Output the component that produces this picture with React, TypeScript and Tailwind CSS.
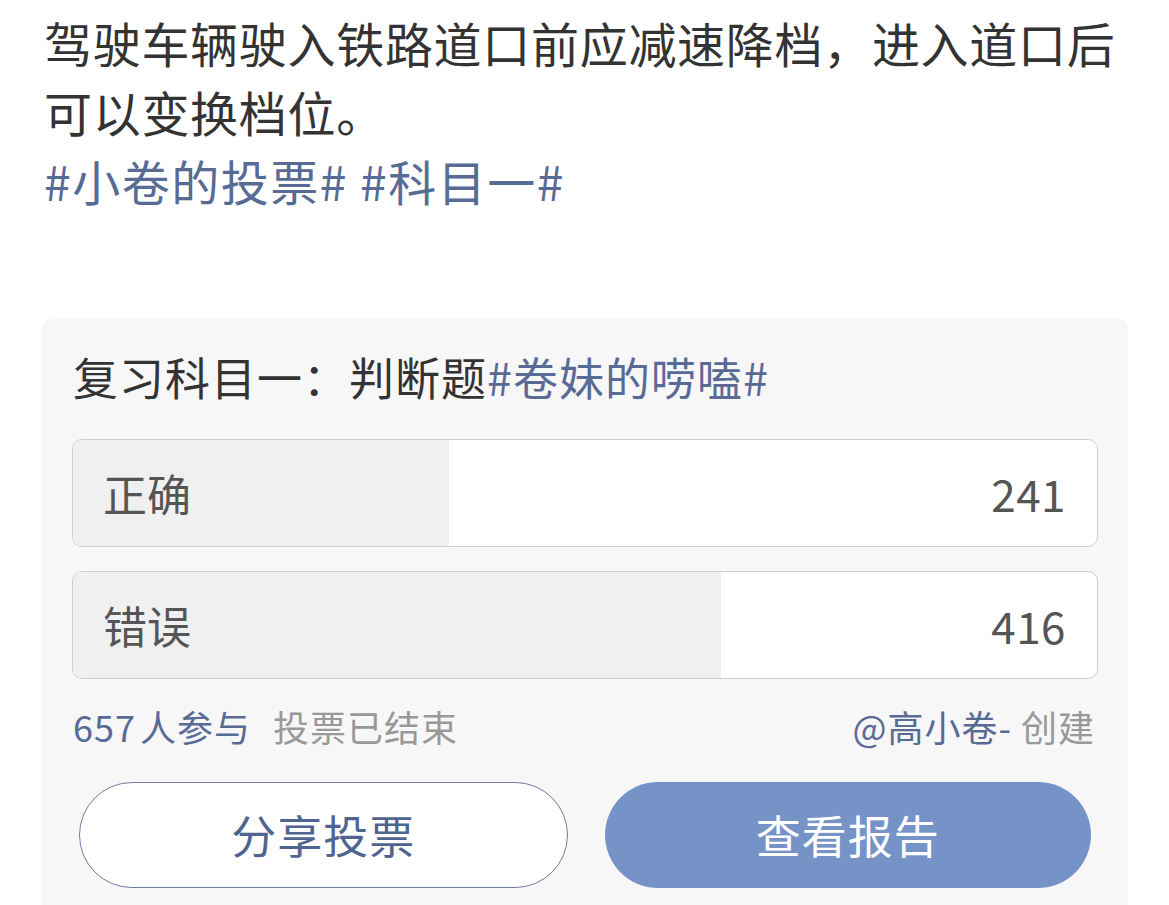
import React from "react";

const options = [
  { label: "正确", count: 241 },
  { label: "错误", count: 416 },
];

export default function App() {
  const total = options.reduce((s, o) => s + o.count, 0);

  return (
    <div
      className="min-h-[905px] bg-white pl-[44px] pr-[30px] pt-[8px] text-[#333]"
      style={{ fontFamily: '"Noto Sans CJK SC", "Noto Sans", sans-serif' }}
    >
      <div className="text-[48px] leading-[69px] tracking-[0.7px]">
        <p>驾驶车辆驶入铁路道口前应减速降档，进入道口后可以变换档位。</p>
        <p className="tracking-[1.5px] text-[#576b95]">#小卷的投票# #科目一#</p>
      </div>

      <div className="mt-[104px] -ml-[2px] mr-[11px] rounded-t-[10px] bg-[#f7f7f7] px-[30px] pt-[28px] pb-[20px]">
        <div className="pl-px text-[45px] leading-[60px] tracking-[1px] text-[#333]">
          复习科目一：判断题<span className="text-[#576b95]">#卷妹的唠嗑#</span>
        </div>

        <div className="mt-[32px] flex flex-col gap-[24px]">
          {options.map((o) => (
            <div
              key={o.label}
              className="relative h-[108px] overflow-hidden rounded-[10px] border border-[#cfcfcf] bg-white"
            >
              <div
                className="absolute inset-y-0 left-0 bg-[#f0f0f0]"
                style={{ width: `${(o.count / total) * 100}%` }}
              />
              <div className="relative flex h-full items-center justify-between pl-[30px] pr-[31px] text-[44px] text-[#555]">
                <span>{o.label}</span>
                <span className="tracking-[0.5px]">{o.count}</span>
              </div>
            </div>
          ))}
        </div>

        <div className="mt-[22px] flex items-center justify-between pl-px pr-[3px] text-[36px] leading-[50px] tracking-[1px]">
          <div>
            <span className="text-[#576b95]">
              {total}
              <span className="ml-[4px]">人参与</span>
            </span>
            <span className="ml-[22px] text-[#999]">投票已结束</span>
          </div>
          <div>
            <span className="text-[#576b95]">@高小卷-</span>
            <span className="ml-[9px] text-[#999]">创建</span>
          </div>
        </div>

        <div className="mt-[31px] flex gap-[37px] px-[7px]">
          <button className="h-[106px] flex-1 rounded-full border border-[#6f7d9d] bg-white text-[45px] tracking-[1px] text-[#4f6590]">
            分享投票
          </button>
          <button className="h-[106px] flex-1 rounded-full bg-[#7693c8] text-[45px] tracking-[1px] text-white">
            查看报告
          </button>
        </div>
      </div>
    </div>
  );
}
